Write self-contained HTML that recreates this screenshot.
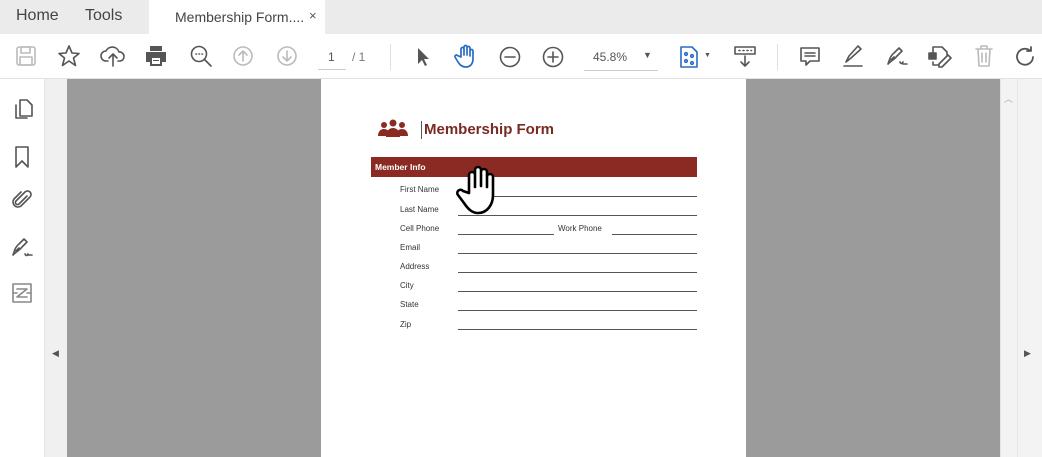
<!DOCTYPE html>
<html><head><meta charset="utf-8"><style>
*{margin:0;padding:0;box-sizing:border-box}
body{width:1042px;height:457px;overflow:hidden;background:#fff;font-family:"Liberation Sans",sans-serif;position:relative}
.a{position:absolute}
.tab{font-size:16px;color:#444;top:7px}
svg{position:absolute;stroke-linecap:round;stroke-linejoin:round}
.lab{position:absolute;font-size:8px;color:#333;left:400px}
.ln{position:absolute;height:1px;background:#555}
</style></head><body>
<div class="a" style="left:0;top:0;width:1042px;height:34px;background:#ebebeb"></div>
<div class="a" style="left:149px;top:0;width:176px;height:34px;background:#fff"></div>
<div class="a tab" style="left:16px">Home</div>
<div class="a tab" style="left:85px">Tools</div>
<div class="a" style="left:175px;top:9px;font-size:14px;color:#444">Membership Form....</div>
<div class="a" style="left:309px;top:8px;font-size:13px;color:#555">×</div>
<div class="a" style="left:0;top:78px;width:1042px;height:1px;background:#e2e2e2"></div>
<!-- toolbar icons -->
<svg style="left:15px;top:45px" width="22" height="22" viewBox="0 0 22 22" fill="none" stroke="#bbb" stroke-width="1.6"><rect x="2" y="2" width="18" height="18" rx="2"/><rect x="6" y="2" width="9" height="6"/><rect x="5" y="12" width="12" height="8"/></svg>
<svg style="left:57px;top:44px" width="24" height="24" viewBox="0 0 24 24" fill="none" stroke="#555" stroke-width="1.6"><path d="M12 2l3 7 7 .5-5.5 4.5 2 7.5L12 17l-6.5 4.5 2-7.5L2 9.5 9 9z"/></svg>
<svg style="left:100px;top:44px" width="26" height="24" viewBox="0 0 26 24" fill="none" stroke="#555" stroke-width="1.6"><path d="M8 17H6a5 5 0 010-10 7 7 0 0113 1 4.5 4.5 0 011 9h-2M13 22V11M9 14l4-4 4 4"/></svg>
<svg style="left:144px;top:44px" width="24" height="24" viewBox="0 0 24 24"><path d="M6 2h12v5H6z M2 8h20v10h-4v4H6v-4H2z" fill="#555"/><rect x="8" y="14" width="8" height="6" fill="#fff"/><rect x="9" y="16" width="6" height="1" fill="#555"/></svg>
<svg style="left:189px;top:44px" width="24" height="24" viewBox="0 0 24 24" fill="none" stroke="#555" stroke-width="1.6"><circle cx="10" cy="10" r="7.5"/><path d="M15.5 15.5L22 22M7 10h.5M10 10h.5M13 10h.5"/></svg>
<svg style="left:232px;top:45px" width="22" height="22" viewBox="0 0 22 22" fill="none" stroke="#bbb" stroke-width="1.6"><circle cx="11" cy="11" r="9"/><path d="M11 16V6M7 10l4-4 4 4"/></svg>
<svg style="left:276px;top:45px" width="22" height="22" viewBox="0 0 22 22" fill="none" stroke="#bbb" stroke-width="1.6"><circle cx="11" cy="11" r="9"/><path d="M11 6v10M7 12l4 4 4-4"/></svg>
<div class="a" style="left:328px;top:50px;font-size:12px;color:#555">1</div>
<div class="a" style="left:318px;top:69px;width:28px;height:1px;background:#ccc"></div>
<div class="a" style="left:352px;top:50px;font-size:12px;color:#777">/ 1</div>
<div class="a" style="left:390px;top:44px;width:1px;height:26px;background:#e0e0e0"></div>
<svg style="left:414px;top:46px" width="18" height="22" viewBox="0 0 18 22"><path d="M4 2v16l4-4 3 6 2-1-3-6h5z" fill="#555"/></svg>
<svg style="left:454px;top:43px" width="24" height="26" viewBox="0 0 24 26" fill="none" stroke="#2b6bc4" stroke-width="1.7"><path d="M7 14V6a1.5 1.5 0 013 0v6V4a1.5 1.5 0 013 0v8V5a1.5 1.5 0 013 0v8V8a1.5 1.5 0 013 0v8c0 5-3 8-7 8s-6-2-8-5l-3-5a1.5 1.5 0 012.5-1.5L7 14"/></svg>
<svg style="left:498px;top:45px" width="24" height="24" viewBox="0 0 24 24" fill="none" stroke="#555" stroke-width="1.6"><circle cx="12" cy="12" r="9.5"/><path d="M7 12h10"/></svg>
<svg style="left:541px;top:45px" width="24" height="24" viewBox="0 0 24 24" fill="none" stroke="#555" stroke-width="1.6"><circle cx="12" cy="12" r="9.5"/><path d="M7 12h10M12 7v10"/></svg>
<div class="a" style="left:593px;top:50px;font-size:12px;color:#555">45.8%</div>
<div class="a" style="left:643px;top:50px;font-size:9px;color:#555">▼</div>
<div class="a" style="left:584px;top:70px;width:74px;height:1px;background:#ccc"></div>
<svg style="left:678px;top:45px" width="22" height="24" viewBox="0 0 22 24" fill="none" stroke="#2b6bc4" stroke-width="1.6"><path d="M3 2h11l5 5v15H3z"/><circle cx="8" cy="9" r="1.3"/><circle cx="14" cy="11" r="1.3"/><circle cx="8" cy="16" r="1.3"/><circle cx="14" cy="18" r="1.3"/></svg>
<div class="a" style="left:704px;top:52px;font-size:7px;color:#555">▼</div>
<svg style="left:733px;top:44px" width="24" height="24" viewBox="0 0 24 24" fill="none" stroke="#555" stroke-width="1.6"><rect x="2" y="3" width="20" height="7"/><path d="M12 12v10M8 18l4 4 4-4M6 6.5h1M10 6.5h1M14 6.5h1M18 6.5h.5"/></svg>
<div class="a" style="left:777px;top:44px;width:1px;height:26px;background:#e0e0e0"></div>
<svg style="left:798px;top:45px" width="24" height="24" viewBox="0 0 24 24" fill="none" stroke="#555" stroke-width="1.6"><path d="M3 3h18v13h-9l-4 4v-4H3z M7 8h10M7 11h10"/></svg>
<svg style="left:841px;top:44px" width="24" height="24" viewBox="0 0 24 24" fill="none" stroke="#555" stroke-width="1.6"><path d="M5 18l3-6 9-10 3 3-10 9-5 4zM3 22h18" /></svg>
<svg style="left:884px;top:44px" width="26" height="24" viewBox="0 0 26 24" fill="none" stroke="#555" stroke-width="1.6"><path d="M4 20c2-6 3-9 6-11l5-5 3 3-5 5c-2 3-5 4-9 8zM10 13l-3 3M16 18c1 2 2 2 3 0M19 20h4"/></svg>
<svg style="left:927px;top:44px" width="26" height="24" viewBox="0 0 26 24" fill="none" stroke="#555" stroke-width="1.6"><path d="M6 8V3h9l5 5v3M6 18v3h5M12 20l9-9 3 3-9 9h-3z"/><rect x="2" y="9" width="7" height="6" fill="#555"/></svg>
<svg style="left:973px;top:44px" width="22" height="24" viewBox="0 0 22 24" fill="none" stroke="#bbb" stroke-width="1.6"><path d="M3 5h16M8 5V2h6v3M5 5l1 17h10l1-17M9 9v9M13 9v9"/></svg>
<svg style="left:1014px;top:45px" width="24" height="24" viewBox="0 0 24 24" fill="none" stroke="#555" stroke-width="1.8"><path d="M19 12a8 8 0 11-3-6.5M17 2v4h-4"/></svg>
<!-- left sidebar -->
<div class="a" style="left:44px;top:79px;width:23px;height:378px;background:#f0f0f0;border-left:1px solid #e4e4e4"></div>
<svg style="left:12px;top:97px" width="22" height="24" viewBox="0 0 22 24" fill="none" stroke="#555" stroke-width="1.6"><path d="M8 3h7l5 5v11H8zM4 8v13h11"/></svg>
<svg style="left:13px;top:145px" width="18" height="24" viewBox="0 0 18 24" fill="none" stroke="#555" stroke-width="1.6"><path d="M3 2h12v20l-6-6-6 6z"/></svg>
<svg style="left:10px;top:188px" width="24" height="24" viewBox="0 0 24 24" fill="none" stroke="#555" stroke-width="1.6"><path d="M17 8l-8 8a2 2 0 01-3-3l9-9a3.5 3.5 0 015 5l-9 9a5 5 0 01-7-7l7-7"/></svg>
<svg style="left:9px;top:235px" width="26" height="24" viewBox="0 0 26 24" fill="none" stroke="#555" stroke-width="1.6"><path d="M4 20c2-6 3-9 6-11l5-5 3 3-5 5c-2 3-5 4-9 8zM10 13l-3 3M16 19c1 2 2 2 3 0M19 20h4"/></svg>
<svg style="left:11px;top:282px" width="22" height="22" viewBox="0 0 22 22" fill="none" stroke="#888" stroke-width="1.6"><rect x="2" y="2" width="18" height="18"/><path d="M6 7h10L6 15h10M2 11h4M16 11h4"/></svg>
<div class="a" style="left:52px;top:348px;font-size:9px;color:#555">◀</div>
<!-- viewer -->
<div class="a" style="left:67px;top:79px;width:933px;height:378px;background:#9b9b9b"></div>
<div class="a" style="left:1000px;top:79px;width:42px;height:378px;background:#f3f3f3;border-left:1px solid #e4e4e4"></div>
<div class="a" style="left:1017px;top:79px;width:1px;height:378px;background:#e6e6e6"></div>
<div class="a" style="left:1004px;top:92px;font-size:9px;color:#aaa">︿</div>
<div class="a" style="left:1024px;top:348px;font-size:9px;color:#555">▶</div>
<!-- page -->
<div class="a" style="left:321px;top:79px;width:425px;height:378px;background:#fff"></div>
<svg style="left:377px;top:119px" width="32" height="20" viewBox="0 0 32 20"><g fill="#8b2a22"><circle cx="7" cy="6" r="3"/><circle cx="16" cy="4" r="3.5"/><circle cx="25" cy="6" r="3"/><path d="M1 17c0-5 3-7 6-7s6 2 6 7zM9 18c0-6 3-9 7-9s7 3 7 9zM19 17c0-5 3-7 6-7s6 2 6 7z"/></g></svg>
<div class="a" style="left:421px;top:121px;width:1px;height:18px;background:#555"></div>
<div class="a" style="left:424px;top:121px;font-size:15px;font-weight:bold;color:#7a2a24">Membership Form</div>
<div class="a" style="left:371px;top:157px;width:326px;height:20px;background:#8a2a22"></div>
<div class="a" style="left:375px;top:162px;font-size:8.5px;font-weight:bold;color:#fff">Member Info</div>
<div class="lab" style="top:185px">First Name</div><div class="ln" style="left:458px;top:196px;width:239px"></div>
<div class="lab" style="top:205px">Last Name</div><div class="ln" style="left:458px;top:215px;width:239px"></div>
<div class="lab" style="top:224px">Cell Phone</div><div class="ln" style="left:458px;top:234px;width:96px"></div>
<div class="a" style="left:558px;top:224px;font-size:8px;color:#333">Work Phone</div><div class="ln" style="left:612px;top:234px;width:85px"></div>
<div class="lab" style="top:243px">Email</div><div class="ln" style="left:458px;top:253px;width:239px"></div>
<div class="lab" style="top:262px">Address</div><div class="ln" style="left:458px;top:272px;width:239px"></div>
<div class="lab" style="top:281px">City</div><div class="ln" style="left:458px;top:291px;width:239px"></div>
<div class="lab" style="top:300px">State</div><div class="ln" style="left:458px;top:310px;width:239px"></div>
<div class="lab" style="top:320px">Zip</div><div class="ln" style="left:458px;top:329px;width:239px"></div>
<!-- hand cursor -->
<svg style="left:455px;top:163px" width="54" height="54" viewBox="0 0 54 54"><path d="M14 30V12a3 3 0 016 0v12V7a3 3 0 016 0v16V9a3 3 0 016 0v15V14a3 3 0 016 0v18c0 10-6 18-15 18-6 0-10-4-14-10l-6-8a3 3 0 015-4z" fill="#fff" stroke="#000" stroke-width="2.6"/></svg>
</body></html>
